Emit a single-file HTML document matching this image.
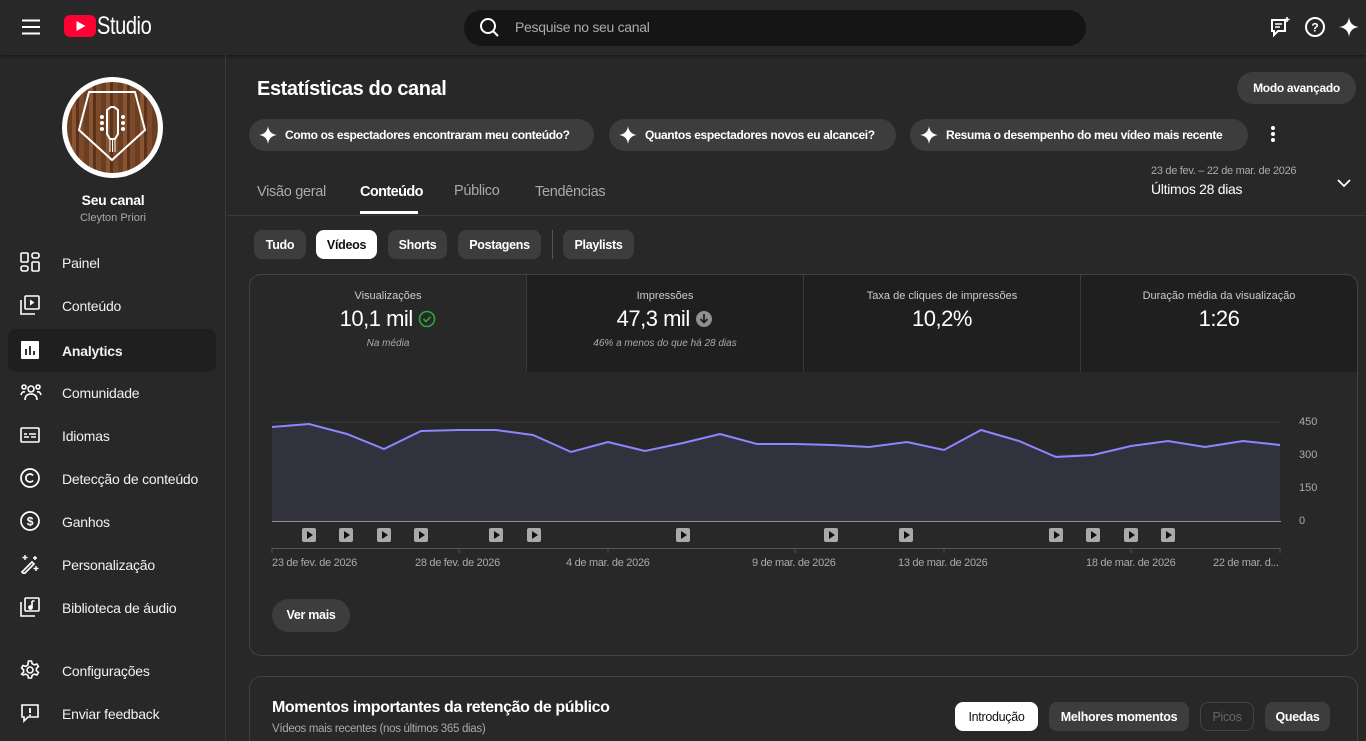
<!DOCTYPE html>
<html><head><meta charset="utf-8"><style>
*{box-sizing:border-box;margin:0;padding:0;white-space:nowrap}
html,body{width:1366px;height:741px;overflow:hidden}
body{background:#282828;font-family:"Liberation Sans",sans-serif;color:#fff;position:relative}
.a{position:absolute}
.hdr{left:0;top:0;width:1366px;height:55px;background:#282828;box-shadow:0 1px 3px rgba(0,0,0,.5)}
.side{left:0;top:55px;width:226px;height:686px;border-right:1px solid #3a3a3a}
.nav{position:absolute;left:8px;width:208px;height:43px;border-radius:8px;display:flex;align-items:center;font-size:14px;color:#f1f1f1;letter-spacing:-.2px}
.nav svg{position:absolute;left:12px;top:11px}
.nav span{position:absolute;left:54px}
.chip{position:absolute;height:32px;border-radius:16px;background:#3d3d3d;display:flex;align-items:center;font-size:12px;letter-spacing:-.35px;font-weight:bold;padding:0 10px 0 36px}
.chip svg{position:absolute;left:10px;top:7px}
.fc{position:absolute;top:230px;height:29px;border-radius:8px;background:#3d3d3d;font-size:12.5px;letter-spacing:-.3px;font-weight:bold;display:flex;align-items:center;justify-content:center}
.tab{position:absolute;top:184px;font-size:14.5px;color:#aaa;letter-spacing:-.3px}
.st{position:absolute;top:276px;height:96px;text-align:center}
.st .l{font-size:11px;color:#ccc;margin-top:14px}
.st .v{font-size:22px;margin-top:4px;letter-spacing:-.5px}
.st .s{font-size:10px;color:#aaa;font-style:italic;margin-top:6px}
.dl{position:absolute;top:557px;font-size:11px;color:#aaa;letter-spacing:-.3px}
.yl{position:absolute;left:1299px;font-size:11px;color:#aaa}
</style></head><body>
<div class="a hdr"></div>
<svg class="a" style="left:22px;top:19px" width="18" height="16"><path d="M0 1.5h18M0 8h18M0 14.5h18" stroke="#fff" stroke-width="2"/></svg>
<svg class="a" style="left:64px;top:15px" width="32" height="22"><rect width="32" height="22" rx="6" fill="#ff0033"/><path d="M12.5 6v10l9-5z" fill="#fff"/></svg>
<div class="a" style="left:97px;top:12px;font-size:25px;letter-spacing:-.5px;transform:scaleX(.8);transform-origin:left">Studio</div>
<div class="a" style="left:464px;top:10px;width:622px;height:36px;border-radius:18px;background:#151515"></div>
<svg class="a" style="left:479px;top:17px" width="21" height="21"><circle cx="9" cy="9" r="7" stroke="#fff" stroke-width="2" fill="none"/><path d="M14 14l5 5" stroke="#fff" stroke-width="2"/></svg>
<div class="a" style="left:515px;top:19px;font-size:14px;color:#aaa;letter-spacing:-.3px">Pesquise no seu canal</div>
<svg class="a" style="left:1269px;top:16px" width="22" height="22"><path d="M3 4h13v11H9l-4 4v-4H3z" stroke="#fff" stroke-width="2" fill="none"/><path d="M6 8h7M6 11h5" stroke="#fff" stroke-width="1.6"/><path d="M18 1v5M15.5 3.5h5" stroke="#fff" stroke-width="1.6"/></svg>
<svg class="a" style="left:1304px;top:16px" width="22" height="22"><circle cx="11" cy="11" r="9" stroke="#fff" stroke-width="2" fill="none"/><text x="11" y="15.5" font-size="12" font-weight="bold" text-anchor="middle" fill="#fff" font-family="Liberation Sans">?</text></svg>
<svg class="a" style="left:1338px;top:16px" width="22" height="22"><path d="M11 1Q12 10 21 11Q12 12 11 21Q10 12 1 11Q10 10 11 1z" fill="#fff"/></svg>

<div class="a side"></div>
<div class="a" style="left:62px;top:77px;width:101px;height:101px;border-radius:50%;background:#fff"></div>
<div class="a" style="left:67px;top:82px;width:91px;height:91px;border-radius:50%;background:repeating-linear-gradient(90deg,#6b3e22 0 5px,#8a5533 5px 9px,#5a321a 9px 12px,#7a4a2b 12px 17px)"></div>
<svg class="a" style="left:67px;top:82px" width="91" height="91"><path d="M22 10H68L78 48 45 78 12 48z" stroke="#fff" stroke-width="2" fill="none"/><path d="M40 28l4-3h3l4 3v24l-3 5h-5l-3-5z" stroke="#fff" stroke-width="2" fill="none"/><path d="M43 58v12M45.5 58v12M48 58v12" stroke="#fff" stroke-width="1"/><circle cx="35" cy="35" r="2" fill="#fff"/><circle cx="35" cy="41" r="2" fill="#fff"/><circle cx="35" cy="47" r="2" fill="#fff"/><circle cx="56" cy="35" r="2" fill="#fff"/><circle cx="56" cy="41" r="2" fill="#fff"/><circle cx="56" cy="47" r="2" fill="#fff"/></svg>
<div class="a" style="left:0;width:226px;top:192px;text-align:center;font-size:14px;font-weight:bold;letter-spacing:-.3px">Seu canal</div>
<div class="a" style="left:0;width:226px;top:212px;text-align:center;font-size:11px;color:#aaa">Cleyton Priori</div>

<div class="nav" style="top:241px"><svg width="20" height="20" fill="none" stroke="#fff" stroke-width="1.6"><rect x="1" y="1" width="7" height="9" rx="1"/><rect x="12" y="1" width="7" height="5" rx="2"/><rect x="1" y="14" width="7" height="5" rx="2"/><rect x="12" y="10" width="7" height="9" rx="1"/></svg><span>Painel</span></div>
<div class="nav" style="top:284px"><svg width="20" height="20" fill="none" stroke="#fff" stroke-width="1.6"><rect x="5" y="1" width="14" height="13" rx="1"/><path d="M1 5v14h14"/><path d="M10 4.5v6l4.5-3z" fill="#fff" stroke="none"/></svg><span>Conteúdo</span></div>
<div class="nav" style="top:329px;background:#1f1f1f;font-weight:bold"><svg width="20" height="20"><rect x="1" y="1" width="18" height="18" rx="1" fill="#fff"/><path d="M6 15V9M10 15V6M14 15v-4" stroke="#1f1f1f" stroke-width="1.8"/></svg><span>Analytics</span></div>
<div class="nav" style="top:371px"><svg width="22" height="20" fill="none" stroke="#fff" stroke-width="1.6"><circle cx="11" cy="7" r="3"/><path d="M5 18q0-6 6-6t6 6"/><circle cx="4" cy="5" r="2"/><circle cx="18" cy="5" r="2"/><path d="M1 13q1-4 4-3M21 13q-1-4-4-3"/></svg><span>Comunidade</span></div>
<div class="nav" style="top:414px"><svg width="20" height="20" fill="none" stroke="#fff" stroke-width="1.6"><rect x="1" y="3" width="18" height="14" rx="1"/><path d="M4 12h5M11 12h5M4 9h3M9 9h7"/></svg><span>Idiomas</span></div>
<div class="nav" style="top:457px"><svg width="20" height="20" fill="none" stroke="#fff" stroke-width="1.7"><circle cx="10" cy="10" r="9"/><path d="M13 7.5a4 4 0 1 0 0 5"/></svg><span>Detecção de conteúdo</span></div>
<div class="nav" style="top:500px"><svg width="20" height="20" fill="none" stroke="#fff" stroke-width="1.7"><circle cx="10" cy="10" r="9"/><text x="10" y="14.5" font-size="12" text-anchor="middle" fill="#fff" stroke="none" font-family="Liberation Sans" font-weight="bold">$</text></svg><span>Ganhos</span></div>
<div class="nav" style="top:543px"><svg width="20" height="20" fill="none" stroke="#fff" stroke-width="1.7"><path d="M2 18L12 8l2 2L4 20z"/><path d="M5 1v5M2.5 3.5h5M16 12v5M13.5 14.5h5M15 2v4M13 4h4" stroke-width="1.4"/></svg><span>Personalização</span></div>
<div class="nav" style="top:586px"><svg width="20" height="20" fill="none" stroke="#fff" stroke-width="1.6"><rect x="5" y="1" width="14" height="13" rx="1"/><path d="M1 5v14h14"/><path d="M12 4v6.5M12 4h2.5" /><circle cx="10.5" cy="10.5" r="1.6" fill="#fff"/></svg><span>Biblioteca de áudio</span></div>
<div class="nav" style="top:649px"><svg width="20" height="20" fill="none" stroke="#fff" stroke-width="1.6"><circle cx="10" cy="10" r="3"/><path d="M8.5 1h3l.6 2.6 2.3 1.3 2.5-.9 1.5 2.6-2 1.8v2.2l2 1.8-1.5 2.6-2.5-.9-2.3 1.3-.6 2.6h-3l-.6-2.6-2.3-1.3-2.5.9L1.6 14l2-1.8V9.9L1.6 8 3 5.5l2.5.9 2.3-1.3z"/></svg><span>Configurações</span></div>
<div class="nav" style="top:692px"><svg width="20" height="20" fill="none" stroke="#fff" stroke-width="1.6"><path d="M2 2h16v12H8l-4 4v-4H2z"/><path d="M10 5v5M10 11.5v1.5" stroke-width="1.8"/></svg><span>Enviar feedback</span></div>

<div class="a" style="left:257px;top:78px;font-size:20px;font-weight:bold;letter-spacing:-.4px">Estatísticas do canal</div>
<div class="a" style="left:1237px;top:72px;width:119px;height:32px;border-radius:16px;background:#3d3d3d;font-size:12px;letter-spacing:-.3px;font-weight:bold;text-align:center;line-height:32px">Modo avançado</div>
<div class="chip" style="left:249px;top:119px;width:345px"><svg width="18" height="18"><path d="M9 0Q10 8 18 9Q10 10 9 18Q8 10 0 9Q8 8 9 0z" fill="#fff"/></svg>Como os espectadores encontraram meu conteúdo?</div>
<div class="chip" style="left:609px;top:119px;width:287px"><svg width="18" height="18"><path d="M9 0Q10 8 18 9Q10 10 9 18Q8 10 0 9Q8 8 9 0z" fill="#fff"/></svg>Quantos espectadores novos eu alcancei?</div>
<div class="chip" style="left:910px;top:119px;width:338px"><svg width="18" height="18"><path d="M9 0Q10 8 18 9Q10 10 9 18Q8 10 0 9Q8 8 9 0z" fill="#fff"/></svg>Resuma o desempenho do meu vídeo mais recente</div>
<svg class="a" style="left:1269px;top:125px" width="8" height="18"><circle cx="4" cy="3" r="2" fill="#fff"/><circle cx="4" cy="9" r="2" fill="#fff"/><circle cx="4" cy="15" r="2" fill="#fff"/></svg>

<div class="tab" style="left:257px">Visão geral</div>
<div class="tab" style="left:360px;color:#fff;font-weight:bold;letter-spacing:-.6px">Conteúdo</div>
<div class="a" style="left:360px;top:211px;width:58px;height:3px;background:#fff"></div>
<div class="tab" style="left:454px;top:183px">Público</div>
<div class="tab" style="left:535px">Tendências</div>
<div class="a" style="left:1151px;top:165px;font-size:11px;color:#aaa;letter-spacing:-.3px">23 de fev. – 22 de mar. de 2026</div>
<div class="a" style="left:1151px;top:181px;font-size:14px;letter-spacing:-.3px">Últimos 28 dias</div>
<svg class="a" style="left:1337px;top:178px" width="14" height="10"><path d="M1 2l6 6 6-6" stroke="#fff" stroke-width="1.8" fill="none"/></svg>
<div class="a" style="left:227px;top:215px;width:1139px;height:1px;background:#3a3a3a"></div>

<div class="fc" style="left:254px;width:52px">Tudo</div>
<div class="fc" style="left:316px;width:61px;background:#fff;color:#0f0f0f">Vídeos</div>
<div class="fc" style="left:388px;width:59px">Shorts</div>
<div class="fc" style="left:458px;width:83px">Postagens</div>
<div class="a" style="left:552px;top:230px;width:1px;height:29px;background:#555"></div>
<div class="fc" style="left:563px;width:71px">Playlists</div>

<div class="a" style="left:249px;top:274px;width:1109px;height:382px;border:1px solid #424242;border-radius:12px;overflow:hidden">
<div class="a" style="left:277px;top:0;width:832px;height:97px;background:#1f1f1f"></div>
<div class="a" style="left:276px;top:0;width:1px;height:97px;background:#3a3a3a"></div>
<div class="a" style="left:553px;top:0;width:1px;height:97px;background:#3a3a3a"></div>
<div class="a" style="left:830px;top:0;width:1px;height:97px;background:#3a3a3a"></div>
</div>
<div class="st" style="left:250px;width:276px"><div class="l">Visualizações</div><div class="v">10,1 mil <svg width="18" height="18" style="vertical-align:-2px"><circle cx="9" cy="9" r="7.5" stroke="#2ba640" stroke-width="1.6" fill="none"/><path d="M5.5 9l2.5 2.5 4.5-4.5" stroke="#2ba640" stroke-width="1.6" fill="none"/></svg></div><div class="s">Na média</div></div>
<div class="st" style="left:527px;width:276px"><div class="l">Impressões</div><div class="v">47,3 mil <svg width="18" height="18" style="vertical-align:-2px"><circle cx="9" cy="9" r="8" fill="#909090"/><path d="M9 4v8M5.5 9l3.5 3.5 3.5-3.5" stroke="#1f1f1f" stroke-width="1.8" fill="none"/></svg></div><div class="s">46% a menos do que há 28 dias</div></div>
<div class="st" style="left:804px;width:276px"><div class="l">Taxa de cliques de impressões</div><div class="v">10,2%</div></div>
<div class="st" style="left:1081px;width:276px"><div class="l">Duração média da visualização</div><div class="v">1:26</div></div>

<svg class="a" style="left:0;top:0" width="1366" height="741">
<path d="M272 422H1281M272 455H1281M272 488H1281" stroke="#3a3a3a" stroke-width="1"/>
<polygon fill="#32323f" points="272,521 272,427 309,424 347,434 384,449 421,431 459,430 496,430 533,435 571,452 608,442 645,451 683,443 720,434 757,444 795,444 832,445 869,447 907,442 944,450 981,430 1019,441 1056,457 1093,455 1131,446 1168,441 1205,447 1243,441 1280,445 1280,521"/>
<polyline fill="none" stroke="#8c86ff" stroke-width="2" points="272,427 309,424 347,434 384,449 421,431 459,430 496,430 533,435 571,452 608,442 645,451 683,443 720,434 757,444 795,444 832,445 869,447 907,442 944,450 981,430 1019,441 1056,457 1093,455 1131,446 1168,441 1205,447 1243,441 1280,445"/>
<path d="M272 521.5H1281" stroke="#909090" stroke-width="1"/>
<path d="M272 548.5H1281M272 548v5M459 548v5M608 548v5M795 548v5M944 548v5M1131 548v5M1280 548v5" stroke="#555" stroke-width="1"/>
<g fill="#aaa"><rect x="302" y="528" width="14" height="14" rx="2"/><rect x="339" y="528" width="14" height="14" rx="2"/><rect x="377" y="528" width="14" height="14" rx="2"/><rect x="414" y="528" width="14" height="14" rx="2"/><rect x="489" y="528" width="14" height="14" rx="2"/><rect x="527" y="528" width="14" height="14" rx="2"/><rect x="676" y="528" width="14" height="14" rx="2"/><rect x="824" y="528" width="14" height="14" rx="2"/><rect x="899" y="528" width="14" height="14" rx="2"/><rect x="1049" y="528" width="14" height="14" rx="2"/><rect x="1086" y="528" width="14" height="14" rx="2"/><rect x="1124" y="528" width="14" height="14" rx="2"/><rect x="1161" y="528" width="14" height="14" rx="2"/></g>
<g fill="#111"><path d="M307 531v8l6-4z"/><path d="M344 531v8l6-4z"/><path d="M382 531v8l6-4z"/><path d="M419 531v8l6-4z"/><path d="M494 531v8l6-4z"/><path d="M532 531v8l6-4z"/><path d="M681 531v8l6-4z"/><path d="M829 531v8l6-4z"/><path d="M904 531v8l6-4z"/><path d="M1054 531v8l6-4z"/><path d="M1091 531v8l6-4z"/><path d="M1129 531v8l6-4z"/><path d="M1166 531v8l6-4z"/></g>
</svg>
<div class="yl" style="top:416px">450</div><div class="yl" style="top:449px">300</div><div class="yl" style="top:482px">150</div><div class="yl" style="top:515px">0</div>
<div class="dl" style="left:272px">23 de fev. de 2026</div>
<div class="dl" style="left:415px">28 de fev. de 2026</div>
<div class="dl" style="left:566px">4 de mar. de 2026</div>
<div class="dl" style="left:752px">9 de mar. de 2026</div>
<div class="dl" style="left:898px">13 de mar. de 2026</div>
<div class="dl" style="left:1086px">18 de mar. de 2026</div>
<div class="dl" style="left:1213px">22 de mar. d...</div>
<div class="a" style="left:272px;top:599px;width:78px;height:33px;border-radius:17px;background:#3d3d3d;font-size:12.5px;letter-spacing:-.3px;font-weight:bold;text-align:center;line-height:33px">Ver mais</div>

<div class="a" style="left:249px;top:676px;width:1109px;height:80px;border:1px solid #424242;border-radius:12px"></div>
<div class="a" style="left:272px;top:699px;font-size:16px;font-weight:bold;letter-spacing:-.4px">Momentos importantes da retenção de público</div>
<div class="a" style="left:272px;top:723px;font-size:11.5px;color:#aaa;letter-spacing:-.3px">Vídeos mais recentes (nos últimos 365 dias)</div>
<div class="fc" style="left:955px;top:702px;width:83px;background:#fff;color:#0f0f0f;font-weight:normal">Introdução</div>
<div class="fc" style="left:1049px;top:702px;width:140px">Melhores momentos</div>
<div class="fc" style="left:1200px;top:702px;width:54px;background:none;border:1px solid #444;color:#666;font-weight:normal">Picos</div>
<div class="fc" style="left:1265px;top:702px;width:65px">Quedas</div>
</body></html>
